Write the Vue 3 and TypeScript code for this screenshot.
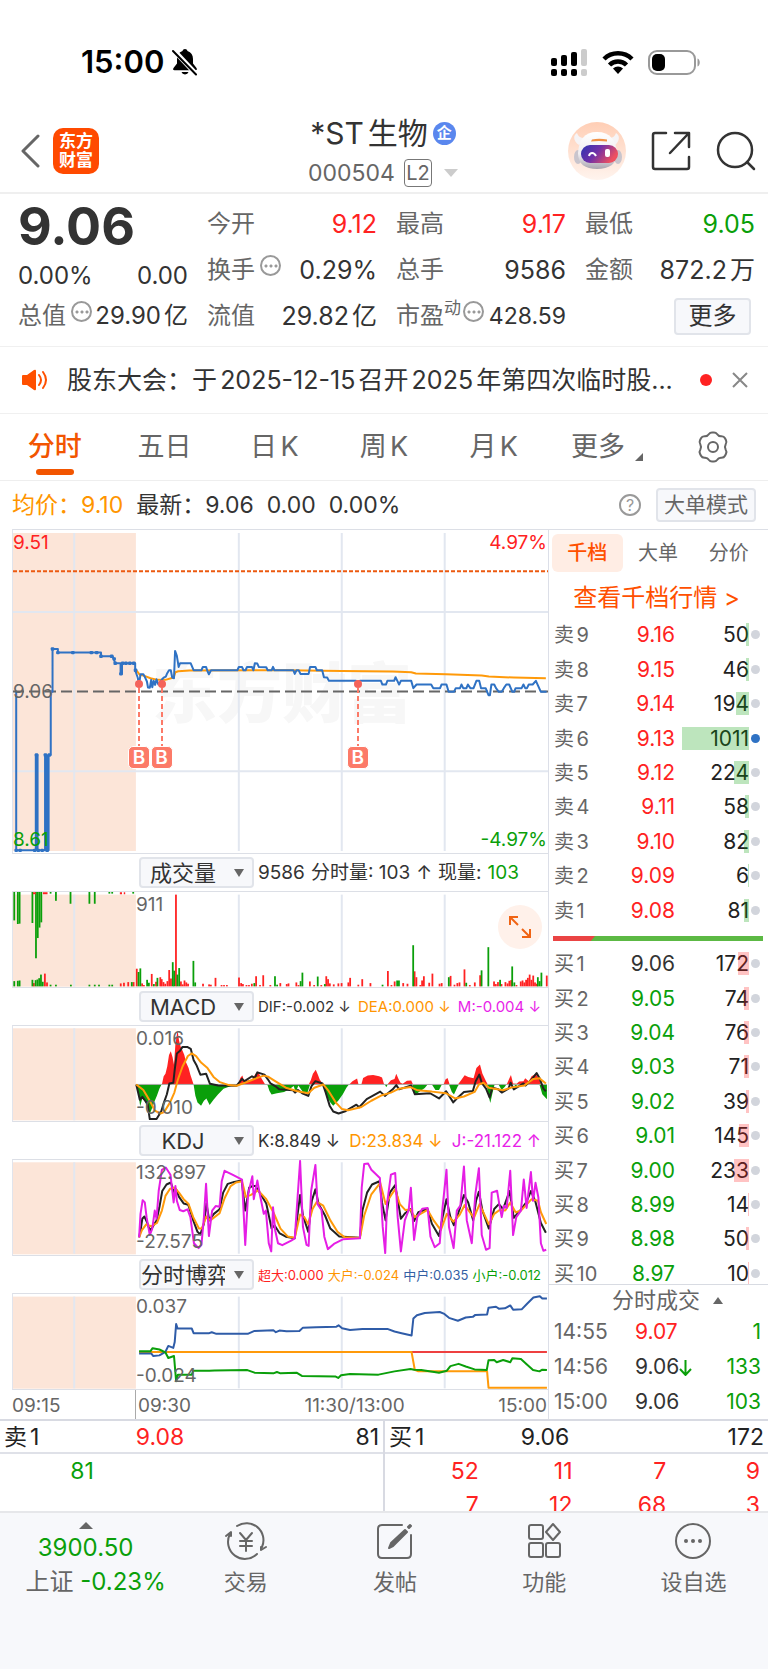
<script setup lang="ts">
import { ref } from 'vue'

type Tone = 'up' | 'down' | 'flat'
interface Level { label: string; price: string; tone: Tone; volume: number; active?: boolean }
interface Reading { text: string; tone: string }

const periods = ['分时', '五日', '日K', '周K', '月K', '更多']
const period = ref('分时')
const bookTabs = ['千档', '大单', '分价']
const bookTab = ref('千档')

const sells: Level[] = [
  { label: '卖9', price: '9.16', tone: 'up', volume: 50 },
  { label: '卖8', price: '9.15', tone: 'up', volume: 46 },
  { label: '卖7', price: '9.14', tone: 'up', volume: 194 },
  { label: '卖6', price: '9.13', tone: 'up', volume: 1011, active: true },
  { label: '卖5', price: '9.12', tone: 'up', volume: 224 },
  { label: '卖4', price: '9.11', tone: 'up', volume: 58 },
  { label: '卖3', price: '9.10', tone: 'up', volume: 82 },
  { label: '卖2', price: '9.09', tone: 'up', volume: 6 },
  { label: '卖1', price: '9.08', tone: 'up', volume: 81 },
]
const buys: Level[] = [
  { label: '买1', price: '9.06', tone: 'flat', volume: 172 },
  { label: '买2', price: '9.05', tone: 'down', volume: 74 },
  { label: '买3', price: '9.04', tone: 'down', volume: 76 },
  { label: '买4', price: '9.03', tone: 'down', volume: 71 },
  { label: '买5', price: '9.02', tone: 'down', volume: 39 },
  { label: '买6', price: '9.01', tone: 'down', volume: 145 },
  { label: '买7', price: '9.00', tone: 'down', volume: 233 },
  { label: '买8', price: '8.99', tone: 'down', volume: 14 },
  { label: '买9', price: '8.98', tone: 'down', volume: 50 },
  { label: '买10', price: '8.97', tone: 'down', volume: 10 },
]
const barWidth = (v: number) => `${Math.max(1, Math.round((v / 1011) * 67))}px`

const trades = [
  { time: '14:55', price: '9.07', tone: 'up', arrow: false, volume: '1' },
  { time: '14:56', price: '9.06', tone: 'flat', arrow: true, volume: '133' },
  { time: '15:00', price: '9.06', tone: 'flat', arrow: false, volume: '103' },
]

const sellQueue = ['81']
const buyQueue = ['52', '11', '7', '9', '7', '12', '68', '3']

const volumeReadings: Reading[] = [
  { text: '9586', tone: 'flat' },
  { text: '分时量: 103', tone: 'flat' },
  { text: '↑', tone: 'flat' },
  { text: '现量:', tone: 'flat' },
  { text: '103', tone: 'down' },
]
const macdReadings: Reading[] = [
  { text: 'DIF:-0.002 ↓', tone: 'flat' },
  { text: 'DEA:0.000 ↓', tone: 'amber' },
  { text: 'M:-0.004 ↓', tone: 'magenta' },
]
const kdjReadings: Reading[] = [
  { text: 'K:8.849 ↓', tone: 'flat' },
  { text: 'D:23.834 ↓', tone: 'amber' },
  { text: 'J:-21.122 ↑', tone: 'magenta' },
]
const gameReadings: Reading[] = [
  { text: '超大:0.000', tone: 'up' },
  { text: '大户:-0.024', tone: 'amber' },
  { text: '中户:0.035', tone: 'navy' },
  { text: '小户:-0.012', tone: 'down' },
]

const gridX = [206, 668, 957, 1246]
const pct = (x: number) => `${((x - 34) / 15.02).toFixed(2)}%`
const markers = [388, 451, 1002]

const pricePath =
  'M43 511V988H58H98V701H103V988H124V701H128V988H134V701H140V511H145V382H160V393H281V404H314L321 425H336V457H340V425H377V446L384 468 388 489 392 458 400 458 405 468 410 480 413 498 418 499 422 475 425 497 429 478 433 490 437 473 442 489 445 487 452 474 457 468 463 465 467 455 472 446 477 446 481 468 486 470 489 388 494 403 499 436 503 425 533 425 541 446 563 446 567 436 576 436 579 446 584 458 590 446 664 446 668 436 677 436 681 446 687 446 691 436 705 436 709 446 713 425 720 426 724 436 745 437 749 446 760 446 764 436 768 446 821 446 825 457 830 446 836 446 841 457 864 457 868 436 883 436 887 446 902 446 907 467 916 468 921 478 997 478 1002 489 1008 478 1067 478 1071 489 1081 489 1085 478 1104 478 1108 467 1113 478 1118 489 1123 478 1152 478 1158 500 1167 489 1208 489 1214 500 1233 500 1237 489 1251 489 1257 511 1272 511 1277 500 1289 500 1293 489 1298 500 1307 500 1311 489 1318 500 1327 500 1335 478 1343 478 1348 500 1361 500 1369 521 1373 521 1377 489 1385 489 1390 500 1398 511 1406 511 1412 500 1419 489 1427 489 1436 511 1441 511 1445 500 1462 500 1467 489 1472 500 1477 500 1482 489 1493 489 1502 478 1516 511 1532 511'
const averagePath =
  'M380 446L390 460 403 463 420 470 440 475 462 475 485 468 490 452 498 449 530 447 800 446 957 448 1100 450 1152 452 1165 456 1250 458 1350 462 1370 465 1440 468 1530 470'
const auctionDots = [
  [145, 382], [160, 393], [202, 393], [254, 393], [269, 393], [281, 404], [311, 404], [318, 412], [321, 425],
  [337, 457], [342, 425], [351, 425], [362, 425], [373, 425], [378, 446], [100, 701], [125, 701], [136, 701],
  [43, 988], [54, 988], [95, 988], [105, 988], [116, 988], [130, 988],
]

type Bar = [number, number]
const redBars: Bar[] = [
  [93, 396], [124, 367], [130, 394], [337, 397], [346, 395], [358, 393], [373, 393], [382, 352], [397, 397], [402, 402],
  [424, 368], [436, 392], [448, 378], [452, 384], [457, 393], [462, 398], [468, 390], [473, 356], [478, 382], [492, 125],
  [506, 391], [511, 400], [516, 388], [521, 394], [526, 398], [568, 398], [585, 400], [590, 401], [603, 380], [620, 402],
  [627, 402], [635, 402], [669, 379], [675, 396], [680, 399], [690, 402], [697, 402], [705, 398], [717, 375], [728, 402],
  [737, 372], [757, 402], [785, 396], [803, 399], [808, 397], [830, 394], [836, 402], [868, 391], [880, 402], [900, 402],
  [914, 375], [919, 384], [924, 397], [935, 400], [948, 397], [957, 396], [976, 394], [981, 380], [1004, 401], [1015, 384],
  [1038, 396], [1087, 359], [1097, 402], [1106, 391], [1130, 396], [1142, 398], [1162, 360], [1167, 378], [1178, 402],
  [1183, 388], [1188, 375], [1203, 395], [1212, 367], [1232, 398], [1238, 396], [1263, 374], [1274, 401], [1282, 396],
  [1288, 394], [1302, 354], [1317, 402], [1331, 394], [1346, 372], [1385, 391], [1390, 399], [1396, 393], [1406, 399],
  [1417, 393], [1423, 397], [1428, 389], [1433, 387], [1448, 402], [1460, 391], [1465, 388], [1470, 394], [1475, 386],
  [1480, 380], [1485, 370], [1490, 386], [1495, 373], [1500, 394], [1505, 398], [1533, 373],
]
const greenBars: Bar[] = [
  [38, 390], [48, 389], [53, 388], [89, 386], [98, 387], [103, 385], [108, 381], [113, 370], [118, 392], [140, 401],
  [155, 401], [197, 401], [249, 401], [264, 401], [276, 401], [305, 401], [313, 401], [368, 393], [387, 362], [392, 351],
  [411, 386], [416, 395], [430, 399], [440, 380], [483, 332], [487, 358], [496, 370], [501, 350], [541, 328], [546, 394],
  [712, 396], [770, 375], [776, 401], [842, 390], [847, 364], [890, 376], [910, 399], [1072, 401], [1113, 388], [1118, 388],
  [1158, 280], [1258, 378], [1307, 395], [1350, 357], [1369, 286], [1402, 386], [1436, 345], [1442, 394], [1508, 378],
  [1513, 390], [1518, 364],
]
const hangingBars: Bar[] = [
  [38, 204], [48, 215], [53, 214], [89, 212], [99, 320], [104, 258], [109, 226], [114, 210], [140, 122], [155, 144],
  [196, 153], [249, 153], [264, 153], [305, 122], [313, 122], [372, 122],
]

const macdRed =
  'M452 295L457 270 462 262 467 240 472 205 477 193 482 212 486 235 490 170 496 130 500 160 505 180 510 192 515 205 520 228 527 245 532 265 541 295ZM666 295L672 275 678 268 683 285 705 280 715 262 722 256 731 275 742 295ZM864 295L870 282 876 262 884 250 890 265 895 280 905 295ZM978 295L987 285 1000 277 1004 295ZM1012 295L1017 275 1030 268 1045 266 1062 270 1070 274 1076 295ZM1085 295L1095 282 1105 278 1110 262 1117 280 1122 290 1128 293 1140 284 1152 283 1157 295ZM1243 295L1248 280 1254 275 1260 295ZM1283 295L1292 282 1302 267 1312 272 1327 276 1335 245 1345 234 1352 262 1362 285 1367 295ZM1420 295L1428 275 1432 266 1438 292 1448 293 1455 286 1467 285 1472 276 1482 285 1490 270 1502 262 1512 280 1516 295Z'
const macdGreen =
  'M380 295L387 330 391 362 397 338 403 345 410 360 418 385 423 372 430 350 438 330 445 308 451 295ZM541 295L546 330 552 350 562 360 570 345 577 338 586 358 597 342 610 325 625 308 640 302 660 295ZM748 295L754 315 760 326 775 322 795 318 810 310 822 300 828 320 835 298 848 318 860 322 868 295ZM905 295L912 325 925 350 933 360 947 345 960 325 970 305 977 295ZM1078 295L1082 304 1086 295ZM1155 295L1162 328 1172 320 1190 306 1198 295ZM1210 295L1220 312 1230 312 1238 295ZM1258 295L1266 318 1272 326 1282 302 1286 295ZM1364 295L1368 325 1374 352 1380 322 1386 295ZM1397 295L1406 312 1415 302 1419 295ZM1440 295L1446 302 1450 295ZM1512 295L1520 325 1533 340V295Z'
const difPath =
  'M380 295L390 342 397 333 405 345 412 355 418 401H437L450 378 458 350 466 325 473 292 484 290 488 250 494 200 503 192 510 180 523 180 533 186 541 220 550 238 560 265 576 262 587 293 610 298 662 299 670 288 677 278 684 285 705 270 713 275 720 258 740 265 750 280 757 292 770 300 782 310 820 313 826 320 834 312 846 322 863 330 872 300 883 285 903 292 912 320 923 360 933 378 948 384 965 378 998 357 1006 365 1027 340 1065 317 1078 330 1100 310 1110 297 1118 310 1152 298 1162 325 1205 322 1230 338 1250 316 1270 350 1280 338 1300 318 1325 315 1333 285 1343 265 1350 290 1362 308 1372 335 1380 305 1396 310 1406 320 1425 308 1431 290 1440 310 1467 292 1473 298 1490 280 1504 260 1512 275 1523 308 1530 316'
const deaPath =
  'M380 295L400 312 418 345 432 375 448 384 458 380 475 350 487 320 497 280 510 240 525 208 536 200 548 208 562 228 580 245 597 272 615 288 640 297 662 299 690 288 720 275 738 268 750 271 770 285 800 305 830 315 863 322 880 305 905 295 920 315 940 350 957 370 975 374 1010 365 1040 345 1070 328 1095 320 1118 308 1150 303 1170 313 1210 317 1250 322 1275 338 1300 332 1330 318 1342 295 1355 290 1370 305 1390 309 1410 313 1435 304 1470 298 1495 278 1512 276 1530 292'

const kPath =
  'M388 352L393 325 397 295 403 288 410 305 418 330 425 322 437 300 445 260 453 210 465 190 477 184 488 218 492 205 500 228 513 248 526 252 540 300 552 335 560 343 570 310 577 248 585 300 598 280 614 266 624 215 637 188 655 182 676 178 686 270 697 200 706 195 715 195 725 212 745 248 760 325 768 315 783 340 800 350 825 355 832 290 840 222 848 285 863 335 873 240 883 205 892 250 910 285 925 325 950 349 1008 353 1015 270 1028 215 1042 190 1063 180 1070 245 1080 300 1092 215 1107 192 1113 230 1123 295 1135 278 1150 265 1160 302 1172 275 1198 265 1210 310 1230 348 1240 290 1251 235 1262 290 1272 315 1288 265 1300 222 1312 245 1326 300 1334 240 1342 212 1352 270 1370 325 1385 265 1398 250 1410 265 1428 210 1440 292 1456 272 1475 245 1488 210 1500 240 1516 308 1530 338'
const dPath =
  'M388 352L396 330 408 312 422 318 438 308 452 270 462 225 475 203 488 200 500 215 513 235 527 250 540 290 556 325 564 325 577 288 588 300 614 278 628 232 645 195 660 184 677 180 688 228 702 222 722 208 745 235 765 275 785 325 805 349 825 353 840 282 852 290 863 312 875 265 887 243 905 255 925 300 945 335 965 352 1008 354 1020 285 1040 220 1065 185 1080 250 1096 222 1107 205 1120 250 1135 268 1150 267 1162 290 1198 268 1215 300 1235 330 1252 280 1270 304 1288 283 1302 253 1328 292 1344 250 1370 312 1385 280 1400 268 1416 270 1430 245 1445 275 1460 270 1490 235 1508 240 1516 275 1531 311'
const jPath =
  'M388 352L392 280 398 238 404 245 409 290 418 345 425 325 432 270 437 295 443 210 452 145 463 138 476 160 485 245 490 195 494 240 502 268 512 272 524 266 532 290 542 370 555 385 563 375 570 290 576 188 584 348 593 270 603 256 614 258 620 180 628 148 650 160 677 175 686 375 694 220 706 165 710 235 720 178 727 220 738 280 744 270 752 370 759 395 764 260 770 330 778 370 790 376 815 362 825 355 831 260 840 118 848 320 858 375 864 378 871 210 883 130 889 250 900 268 908 350 918 388 935 372 960 358 1008 355 1013 200 1020 127 1031 126 1040 145 1064 170 1072 320 1079 400 1084 250 1095 160 1107 155 1114 290 1123 395 1134 300 1145 268 1151 200 1160 360 1169 290 1183 264 1198 262 1206 350 1218 382 1232 370 1240 260 1251 145 1258 320 1271 385 1280 270 1290 255 1300 135 1308 300 1322 370 1332 220 1342 140 1350 345 1362 390 1372 385 1378 215 1393 209 1400 255 1406 290 1412 255 1420 262 1430 148 1438 345 1447 290 1460 270 1468 175 1476 262 1488 152 1494 240 1501 185 1509 230 1516 370 1523 393 1531 390'

const midPath =
  'M388 295H422L428 303 445 301 462 290 470 272 484 278 488 260 492 205 496 219H536L541 233 585 233 592 230 605 235H693L712 226 765 224 772 230 782 225 802 227 838 226 848 216 885 215 942 213 948 209 958 218 980 223 1015 220 1085 220 1105 228 1125 233 1153 240 1158 188 1168 178 1190 171 1232 168 1245 174 1258 186 1283 195 1305 185 1325 183 1332 177 1365 176 1369 155 1390 152 1398 158 1415 157 1430 148 1438 161 1462 160 1478 142 1495 124 1513 120 1520 127 1533 127'
const bigPath = 'M388 291H1153L1162 345 1172 350H1365L1369 400H1533'
const smallPath =
  'M388 288H420L426 279 445 283 462 292 470 309 486 303 492 380 497 360 536 360 540 348 585 348 600 347 692 346 712 354 765 356 775 352 785 356 830 354 845 364 940 366 947 370 955 362 980 358 1060 360 1105 350 1150 343 1160 345 1180 346 1230 354 1252 348 1262 334 1285 327 1305 335 1330 344 1364 346 1369 316 1385 315 1392 322 1410 315 1430 322 1436 310 1460 312 1476 328 1494 346 1512 350 1520 345 1533 346'
</script>

<template>
  <div class="page">
    <div class="status">
      <div class="clock">
        <span>15:00</span>
        <svg width="26" height="28" viewBox="0 0 26 28" aria-hidden="true">
          <path d="M13 1c-1.300 0-2.200.8-2.500 2C6.800 4.200 5 7.200 5 11v4.500L1.500 20c-.8 1.300-.3 2.300 1 2.300h21c1.300 0 1.800-1 1-2.300L21 15.500V11c0-3.800-1.800-6.800-5.500-8C15.200 1.800 14.300 1 13 1zM9.500 24a3.600 3.200 0 0 0 7 0z" fill="#000" />
          <path d="M1 1.500L25 27" stroke="#fff" stroke-width="5" />
          <path d="M1 3L24 26.500" stroke="#000" stroke-width="2" stroke-linecap="round" />
        </svg>
      </div>
      <div class="signals">
        <svg width="37" height="27" viewBox="0 0 37 27" aria-hidden="true">
          <g fill="#000">
            <rect x="0" y="9" width="6" height="8" rx="2" /><rect x="10" y="6" width="6" height="11" rx="2" /><rect x="20" y="3" width="6" height="14" rx="2" />
            <rect x="0" y="20" width="6" height="7" rx="2" /><rect x="10" y="20" width="6" height="7" rx="2" /><rect x="20" y="20" width="6" height="7" rx="2" />
          </g>
          <g fill="#ccc"><rect x="30" y="0" width="6" height="17" rx="2" /><rect x="30" y="20" width="6" height="7" rx="2" /></g>
        </svg>
        <svg width="32" height="24" viewBox="0 0 32 24" aria-hidden="true">
          <g fill="none" stroke="#000" stroke-width="4.500">
            <path d="M2 9a20 20 0 0 1 28 0" /><path d="M7.500 15a12 12 0 0 1 17 0" />
          </g>
          <path d="M16 24l-5-5.500a7.500 7.500 0 0 1 10 0z" fill="#000" />
        </svg>
        <svg width="53" height="25" viewBox="0 0 53 25" aria-hidden="true">
          <rect x="1" y="1" width="46" height="23" rx="8" fill="none" stroke="#999" stroke-width="2" />
          <rect x="4" y="4" width="13" height="17" rx="5" fill="#000" />
          <path d="M49.500 8.500c3 1 3 7 0 8z" fill="#999" />
        </svg>
      </div>
    </div>

    <header class="head">
      <div class="head-left">
        <button class="plain" aria-label="返回">
          <svg width="20" height="34" viewBox="0 0 20 34"><path d="M18 2L3 17l15 15" fill="none" stroke="#666" stroke-width="3" stroke-linecap="round" stroke-linejoin="round" /></svg>
        </button>
        <a class="brand" href="#home"><span>东方</span><span>财富</span></a>
      </div>
      <div class="head-mid">
        <h1>*ST生物<span class="corp">企</span></h1>
        <p class="code">000504<span class="l2">L2</span>
          <svg width="14" height="8" viewBox="0 0 14 8" aria-hidden="true"><path d="M0 0h14L7 8z" fill="#ccc" /></svg>
        </p>
      </div>
      <div class="head-right">
        <button class="plain" aria-label="智能助手">
          <svg width="58" height="58" viewBox="0 0 58 58">
            <defs>
              <linearGradient id="halo" x1="0" y1="0" x2="0" y2="1"><stop offset="0" stop-color="#ffceb5" /><stop offset="1" stop-color="#fff4ee" /></linearGradient>
              <linearGradient id="visor" x1="0" y1="0" x2="1" y2="0.400"><stop offset="0" stop-color="#2c35b0" /><stop offset="0.500" stop-color="#7030a8" /><stop offset="1" stop-color="#ee5060" /></linearGradient>
              <linearGradient id="shell" x1="0" y1="0" x2="0" y2="1"><stop offset="0" stop-color="#fff" /><stop offset="0.600" stop-color="#efedf0" /><stop offset="1" stop-color="#aaa6b0" /></linearGradient>
            </defs>
            <circle cx="29" cy="29" r="29" fill="url(#halo)" />
            <path d="M9 11c-4 2-4 8 2 12l6-7c-5 0-7-2-8-5zM48 11c4 2 4 8-1 12l-6-7c4 0 6-2 7-5z" fill="#f6f4f6" />
            <ellipse cx="10" cy="35" rx="4" ry="7" fill="#c9c5cd" /><ellipse cx="50" cy="35" rx="4" ry="7" fill="#c9c5cd" />
            <path d="M29 10c13 0 19 8 20 21 0 11-8 16-20 16S10 42 10 31c1-13 6-21 19-21z" fill="url(#shell)" />
            <path d="M24 17.500q7-1.500 15 0v2q-8-1-16 0z" fill="#f09045" />
            <rect x="13" y="23" width="37" height="18" rx="9" fill="url(#visor)" />
            <path d="M21 34c1-4 5-4 7 0" fill="none" stroke="#fff" stroke-width="2" /><rect x="37" y="27" width="5" height="8" rx="2" fill="#fff" />
          </svg>
        </button>
        <button class="plain" aria-label="分享">
          <svg width="40" height="40" viewBox="0 0 40 40" fill="none" stroke="#333" stroke-width="2.500" stroke-linecap="round" stroke-linejoin="round">
            <path d="M15 2H4a2 2 0 0 0-2 2v32a2 2 0 0 0 2 2h32a2 2 0 0 0 2-2V26M19 22L37 3M24 2h14v14" />
          </svg>
        </button>
        <button class="plain" aria-label="搜索">
          <svg width="40" height="40" viewBox="0 0 40 40" fill="none" stroke="#333" stroke-width="2.500" stroke-linecap="round"><circle cx="19" cy="19" r="17" /><path d="M31 31l7 7" /></svg>
        </button>
      </div>
    </header>

    <section class="stats">
      <div class="col">
        <strong class="last">9.06</strong>
        <div class="cell change"><span>0.00%</span><span>0.00</span></div>
        <div class="cell"><span class="name">总值<i class="more-dot"></i></span><b>29.90亿</b></div>
      </div>
      <div class="col">
        <div class="cell"><span class="name">今开</span><b class="up">9.12</b></div>
        <div class="cell"><span class="name">换手<i class="more-dot"></i></span><b>0.29%</b></div>
        <div class="cell"><span class="name">流值</span><b>29.82亿</b></div>
      </div>
      <div class="col">
        <div class="cell"><span class="name">最高</span><b class="up">9.17</b></div>
        <div class="cell"><span class="name">总手</span><b>9586</b></div>
        <div class="cell"><span class="name">市盈<sup>动</sup><i class="more-dot tight"></i></span><b class="pe">428.59</b></div>
      </div>
      <div class="col">
        <div class="cell"><span class="name">最低</span><b class="down">9.05</b></div>
        <div class="cell"><span class="name">金额</span><b>872.2万</b></div>
        <div class="cell end"><button class="chip big">更多</button></div>
      </div>
    </section>

    <section class="notice">
      <svg width="26" height="22" viewBox="0 0 26 22" aria-hidden="true">
        <path d="M0 7q0-1 1-1h4l7-5q2-1 2 1v18q0 2-2 1l-7-5H1q-1 0-1-1z" fill="#ff5000" />
        <path d="M17 6q4 5 0 10M21 3q6 8 0 16" fill="none" stroke="#ff5000" stroke-width="2" stroke-linecap="round" />
      </svg>
      <p>股东大会：于2025-12-15召开2025年第四次临时股...</p>
      <span class="dot"></span>
      <button class="plain" aria-label="关闭"><svg width="16" height="16" viewBox="0 0 16 16"><path d="M1 1l14 14M15 1L1 15" stroke="#888" stroke-width="2" /></svg></button>
    </section>

    <nav class="periods">
      <button v-for="p in periods" :key="p" class="plain period" :class="{ on: p === period, menu: p === '更多' }" @click="period = p">{{ p }}</button>
      <button class="plain period" aria-label="设置">
        <svg width="32" height="32" viewBox="0 0 32 32" fill="none" stroke="#666" stroke-width="2" stroke-linejoin="round">
          <path d="M12 3q1-1.500 3-1.500h2q2 0 3 1.500 1.500 2.500 4.500 2.200 2.500 0 3.500 2l1 2q1 2-.3 4-1.500 2.800 0 5.600 1.300 2 .3 4l-1 2q-1 2-3.500 2Q21.500 26.500 20 29q-1 1.500-3 1.500h-2q-2 0-3-1.500-1.500-2.500-4.500-2.200-2.500 0-3.500-2l-1-2q-1-2 .3-4 1.500-2.800 0-5.600-1.300-2-.3-4l1-2q1-2 3.500-2Q10.500 5.500 12 3z" />
          <circle cx="16" cy="16" r="5" />
        </svg>
      </button>
    </nav>

    <section class="summary">
      <span class="amber">均价：9.10</span>
      <span class="latest">最新：9.06</span><span>0.00</span><span>0.00%</span>
      <button class="plain help" aria-label="帮助">?</button>
      <button class="chip">大单模式</button>
    </section>

    <main class="market">
      <div class="charts">
        <div class="plot price">
          <span class="mark" aria-hidden="true">东方财富</span>
          <svg class="draw" viewBox="34 24 1502 972" preserveAspectRatio="none" aria-label="分时走势">
            <rect x="34" y="33" width="345" height="957" class="shade" />
            <path v-for="x in gridX" :key="x" :d="`M${x} 33V990`" class="rule" />
            <path d="M34 271H1536M34 750H1536" class="rule" />
            <path d="M34 148H1536" class="limit" />
            <path d="M34 510H1536" class="base" />
            <path :d="averagePath" class="line amber-line" />
            <path :d="pricePath" class="line blue-line" />
            <path d="M101 701V988M127 701V988M132 701V988M338 425V457" class="line blue-line" />
            <rect v-for="(d, i) in auctionDots" :key="i" :x="d[0] - 5" :y="d[1] - 5" width="10" height="10" rx="3" fill="#2f72c4" />
          </svg>
          <span v-for="m in markers" :key="m" class="flag" :style="{ left: pct(m) }"><i></i><em>B</em></span>
          <span class="tag top up">9.51</span><span class="tag mid">9.06</span><span class="tag bottom down">8.61</span>
          <span class="tag top right up">4.97%</span><span class="tag bottom right down">-4.97%</span>
        </div>

        <div class="bar-head">
          <select class="pick" aria-label="成交量指标"><option>成交量</option></select>
          <div class="readings vol"><span v-for="r in volumeReadings" :key="r.text + r.tone" :class="r.tone">{{ r.text }}</span></div>
        </div>
        <div class="plot">
          <svg class="draw" viewBox="34 117 1502 291" preserveAspectRatio="none" aria-label="成交量">
            <rect x="34" y="125" width="345" height="282" class="shade" />
            <path v-for="x in gridX" :key="x" :d="`M${x} 125V407`" class="rule" />
            <rect v-for="b in hangingBars" :key="'h' + b[0]" :x="b[0] - 3" y="117" width="5" :height="b[1] - 117" class="fall" />
            <path d="M90 121H98M118 121H131M334 121H340M345 121H349" class="rise-line" />
            <rect v-for="b in redBars" :key="'r' + b[0]" :x="b[0] - 3" :y="b[1]" width="5" :height="406 - b[1]" class="rise" />
            <rect v-for="b in greenBars" :key="'g' + b[0]" :x="b[0] - 3" :y="b[1]" width="5" :height="406 - b[1]" class="fall" />
          </svg>
          <span class="tag top open">911</span>
          <button class="plain expand" aria-label="展开">
            <svg width="22" height="22" viewBox="0 0 22 22" fill="none" stroke="#f06414" stroke-width="2"><path d="M1 9V1h8M1 1l8 8M21 13v8h-8M21 21l-8-8" /></svg>
          </button>
        </div>

        <div class="bar-head">
          <select class="pick" aria-label="MACD指标"><option>MACD</option></select>
          <div class="readings macd"><span v-for="r in macdReadings" :key="r.text" :class="r.tone">{{ r.text }}</span></div>
        </div>
        <div class="plot">
          <svg class="draw" viewBox="34 116 1502 291" preserveAspectRatio="none" aria-label="MACD">
            <rect x="34" y="123" width="345" height="282" class="shade" />
            <path v-for="x in gridX" :key="x" :d="`M${x} 123V405`" class="rule" />
            <path :d="macdRed" class="rise" /><path :d="macdGreen" class="fall" />
            <path d="M380 295H1533" class="zero" />
            <path :d="difPath" class="line black-line" /><path :d="deaPath" class="line amber-line" />
          </svg>
          <span class="tag top open">0.016</span><span class="tag bottom open">-0.010</span>
        </div>

        <div class="bar-head">
          <select class="pick" aria-label="KDJ指标"><option>KDJ</option></select>
          <div class="readings kdj"><span v-for="r in kdjReadings" :key="r.text" :class="r.tone">{{ r.text }}</span></div>
        </div>
        <div class="plot">
          <svg class="draw" viewBox="34 115 1502 291" preserveAspectRatio="none" aria-label="KDJ">
            <rect x="34" y="122" width="345" height="282" class="shade" />
            <path v-for="x in gridX" :key="x" :d="`M${x} 122V402`" class="rule" />
            <path :d="kPath" class="line black-line" /><path :d="dPath" class="line amber-line" /><path :d="jPath" class="line magenta-line" />
          </svg>
          <span class="tag top open">132.897</span><span class="tag bottom open">-27.575</span>
        </div>

        <div class="bar-head">
          <select class="pick" aria-label="分时博弈指标"><option>分时博弈</option></select>
          <div class="readings game"><span v-for="r in gameReadings" :key="r.text" :class="r.tone">{{ r.text }}</span></div>
        </div>
        <div class="plot">
          <svg class="draw" viewBox="34 113 1502 291" preserveAspectRatio="none" aria-label="分时博弈">
            <rect x="34" y="121" width="345" height="282" class="shade" />
            <path v-for="x in gridX" :key="x" :d="`M${x} 121V402`" class="rule" />
            <path d="M388 291H1533" class="line red-line" />
            <path :d="bigPath" class="line amber-line" /><path :d="midPath" class="line navy-line" /><path :d="smallPath" class="line green-line" />
          </svg>
          <span class="tag top open">0.037</span><span class="tag bottom open">-0.024</span>
        </div>
        <div class="axis"><span>09:15</span><span>09:30</span><span>11:30/13:00</span><span>15:00</span></div>
      </div>

      <aside class="book">
        <div class="book-tabs">
          <button v-for="t in bookTabs" :key="t" class="plain" :class="{ on: t === bookTab }" @click="bookTab = t">{{ t }}</button>
        </div>
        <a class="all" href="#levels">查看千档行情 &gt;</a>
        <table class="levels sells">
          <tbody>
            <tr v-for="l in sells" :key="l.label">
              <th scope="row">{{ l.label }}</th><td :class="l.tone">{{ l.price }}</td>
              <td class="qty"><span>{{ l.volume }}</span><i :style="{ width: barWidth(l.volume) }"></i><u :class="{ active: l.active }"></u></td>
            </tr>
          </tbody>
        </table>
        <div class="ratio"><i></i></div>
        <table class="levels buys">
          <tbody>
            <tr v-for="l in buys" :key="l.label">
              <th scope="row">{{ l.label }}</th><td :class="l.tone">{{ l.price }}</td>
              <td class="qty"><span>{{ l.volume }}</span><i :style="{ width: barWidth(l.volume) }"></i><u></u></td>
            </tr>
          </tbody>
        </table>
        <button class="plain ticks-head">分时成交<svg width="10" height="7" viewBox="0 0 10 7" aria-hidden="true"><path d="M5 0l5 7H0z" fill="#666" /></svg></button>
        <table class="ticks">
          <tbody>
            <tr v-for="t in trades" :key="t.time">
              <th scope="row">{{ t.time }}</th>
              <td :class="t.tone">{{ t.price }}<svg v-if="t.arrow" width="13" height="16" viewBox="0 0 13 16" aria-hidden="true"><path d="M6.500 0v15M1 9l5.500 6L12 9" fill="none" stroke="#0a9f0a" stroke-width="2" /></svg></td>
              <td class="down">{{ t.volume }}</td>
            </tr>
          </tbody>
        </table>
      </aside>
    </main>

    <section class="queues">
      <div class="queue">
        <div class="queue-head"><span>卖1</span><span class="up">9.08</span><span>81</span></div>
        <div class="queue-grid down"><span v-for="(q, i) in sellQueue" :key="i">{{ q }}</span></div>
      </div>
      <div class="queue">
        <div class="queue-head"><span>买1</span><span>9.06</span><span>172</span></div>
        <div class="queue-grid up"><span v-for="(q, i) in buyQueue" :key="i">{{ q }}</span></div>
      </div>
    </section>

    <footer class="dock">
      <a class="index" href="#index">
        <svg width="14" height="7" viewBox="0 0 14 7" aria-hidden="true"><path d="M7 0l7 7H0z" fill="#666" /></svg>
        <span class="down">3900.50</span>
        <span class="index-name">上证 <span class="down">-0.23%</span></span>
      </a>
      <a href="#trade">
        <svg width="42" height="38" viewBox="0 0 42 38" fill="none" stroke="#666" stroke-width="2" stroke-linecap="round" stroke-linejoin="round">
          <path d="M12 4a17 17 0 0 1 25 21M36 28v-3M36 28l5-3M32 32A17 17 0 0 1 5 12M1 14l5-4v4" />
          <path d="M15 11l6 7 6-7M21 18v11M15 19h12M15 24h12" />
        </svg>
        <span>交易</span>
      </a>
      <a href="#post">
        <svg width="38" height="38" viewBox="0 0 38 38" fill="none" stroke="#666" stroke-width="2" stroke-linecap="round" stroke-linejoin="round">
          <path d="M26 3H6q-4 0-4 4v25q0 4 4 4h25q4 0 4-4V13" />
          <path d="M13 26l2-5L29 8l2 2-14 14zM32 5l2-2 1 1-2 2z" fill="#666" />
        </svg>
        <span>发帖</span>
      </a>
      <a href="#features">
        <svg width="36" height="36" viewBox="0 0 36 36" fill="none" stroke="#666" stroke-width="2" stroke-linejoin="round">
          <rect x="3" y="2" width="14" height="14" rx="2" /><rect x="3" y="20" width="14" height="14" rx="2" /><rect x="20" y="20" width="14" height="14" rx="2" /><path d="M27 1l7 8-7 8-7-8z" />
        </svg>
        <span>功能</span>
      </a>
      <a href="#watch">
        <svg width="38" height="38" viewBox="0 0 38 38"><circle cx="19" cy="19" r="17" fill="none" stroke="#666" stroke-width="2" /><g fill="#666"><circle cx="12" cy="19" r="2" /><circle cx="19" cy="19" r="2" /><circle cx="26" cy="19" r="2" /></g></svg>
        <span>设自选</span>
      </a>
    </footer>
  </div>
</template>

<style>
body { margin: 0; background: #fff; }
</style>

<style scoped>
.page { font-family: Inter, "Noto Sans CJK SC", sans-serif; color: #333; font-size: 24px; background: #fff; text-autospace: normal; overflow: hidden; }
.page *, .page *::before, .page *::after { box-sizing: border-box; }
h1, p { margin: 0; font-weight: 400; }
i, em, u { font-style: normal; text-decoration: none; }
b, th { font-weight: 400; }
a { color: inherit; text-decoration: none; }
svg { display: block; flex: none; }
table { border-collapse: collapse; width: 100%; }
th, td { padding: 0; }
button, select { font: inherit; color: inherit; margin: 0; text-autospace: inherit; }
.plain { border: 0; background: none; padding: 0; }
.up { color: #f22; }
.down { color: #0a9f0a; }
.flat { color: #333; }
.amber { color: #ff9500; }
.magenta { color: #e81ee8; }
.navy { color: #3460a4; }

.status { height: 112px; padding: 44px 67px 32px 81px; display: flex; justify-content: space-between; align-items: center; color: #000; }
.clock { display: flex; align-items: center; gap: 8px; font-size: 31px; font-weight: 600; line-height: 36px; }
.signals { display: flex; align-items: center; gap: 14px; }

.head { height: 82px; padding: 2px 12px 8px; border-bottom: 2px solid #efefef; display: grid; grid-template-columns: 1fr auto 1fr; align-items: center; }
.head-left { display: flex; align-items: center; gap: 13px; padding-left: 8px; }
.brand { width: 46px; height: 46px; border-radius: 10px; background: #ff4a00; color: #fff; font-size: 17px; font-weight: 700; line-height: 19px; display: flex; flex-direction: column; align-items: center; justify-content: center; }
.head-mid { display: flex; flex-direction: column; align-items: center; gap: 7px; padding-right: 2px; }
h1 { font-size: 30px; line-height: 38px; display: flex; align-items: center; gap: 5px; }
.corp { width: 23px; height: 23px; border-radius: 50%; background: #5a87ee; color: #fff; font-size: 15px; font-weight: 700; line-height: 22px; text-align: center; }
.code { font-size: 23px; line-height: 28px; color: #666; display: flex; align-items: center; }
.l2 { width: 28px; height: 28px; margin: 0 12px 0 9px; border: 1px solid #777; border-radius: 4px; font-size: 20px; line-height: 26px; text-align: center; }
.head-right { display: flex; align-items: center; justify-content: flex-end; gap: 25px; }

.stats { display: grid; grid-template-columns: repeat(4, 1fr); column-gap: 19px; padding: 7px 13px 7px 18px; border-bottom: 1px solid #f0f0f0; }
.col { display: flex; flex-direction: column; }
.last { height: 50px; font-size: 52px; line-height: 52px; font-weight: 700; }
.cell { height: 46px; line-height: 46px; display: flex; justify-content: space-between; }
.change { height: 42px; line-height: 50px; }
.col + .col b { font-size: 25px; }
.name { color: #666; display: flex; white-space: nowrap; }
.name sup { font-size: 17px; line-height: 30px; vertical-align: top; }
.more-dot { width: 21px; height: 21px; margin: 8px 0 0 5px; border: 2px solid #999; border-radius: 50%; background: radial-gradient(circle at 4px 9px, #999 1px, transparent 2px), radial-gradient(circle at 9px 9px, #999 1px, transparent 2px), radial-gradient(circle at 14px 9px, #999 1px, transparent 2px); }
.more-dot.tight { margin-left: 2px; }
.cell b { white-space: nowrap; }
.col .cell .pe { font-size: 23px; }
.end { justify-content: flex-end; align-items: center; padding-right: 4px; }
.chip { height: 34px; padding: 0 6px; border: 2px solid #e1e4ea; border-radius: 4px; background: #f7f8fb; font-size: 21px; line-height: 28px; color: #666; white-space: nowrap; }
.chip.big { width: 77px; height: 37px; font-size: 24px; color: #333; }

.notice { height: 67px; padding: 0 20px 0 22px; border-bottom: 1px solid #f0f0f0; display: flex; align-items: center; }
.notice p { flex: 1; margin-left: 19px; white-space: nowrap; font-size: 25px; line-height: 40px; }
.dot { width: 12px; height: 12px; border-radius: 50%; background: #f22; margin-right: 20px; }

.periods { height: 67px; border-bottom: 1px solid #eee; display: grid; grid-template-columns: repeat(7, 1fr); }
.period { position: relative; display: flex; align-items: center; justify-content: center; font-size: 27px; line-height: 40px; color: #666; }
.period.on { color: #f25500; font-weight: 500; }
.period.on::after { content: ""; position: absolute; bottom: 5px; left: 50%; width: 38px; height: 6px; margin-left: -19px; border-radius: 3px; background: #f25500; }
.period.menu::after { content: ""; border-left: 8px solid transparent; border-bottom: 8px solid #666; margin: 20px -7px 0 10px; }

.summary { height: 48px; padding: 0 12px; display: flex; align-items: center; font-size: 23px; line-height: 30px; gap: 13px; white-space: nowrap; }
.help { width: 22px; height: 22px; margin: 0 2px 0 auto; border: 2px solid #999; border-radius: 50%; color: #999; font-size: 16px; line-height: 18px; }

.market { display: grid; grid-template-columns: 536fr 220fr; padding-left: 12px; }
.charts { min-width: 0; }
.plot { position: relative; height: 97px; border-left: 1px solid #e1e4ec; border-top: 1px solid #dcdfe6; border-bottom: 1px solid #dcdfe6; }
.plot.price { height: 325px; }
.draw { position: absolute; inset: 0; width: 100%; height: 100%; }
.draw path { vector-effect: non-scaling-stroke; }
.shade { fill: #fce5d8; }
.rule { stroke: #e2e7f0; stroke-width: 2; fill: none; }
.limit { stroke: #ec5a10; stroke-width: 2; stroke-dasharray: 4 2; }
.base { stroke: #666; stroke-width: 2; stroke-dasharray: 11 5; }
.line { fill: none; stroke-width: 2; stroke-linejoin: round; }
.blue-line { stroke: #2f72c4; }
.amber-line { stroke: #ff9a0a; }
.black-line { stroke: #222; }
.magenta-line { stroke: #e51ee5; }
.red-line { stroke: #ee4040; }
.navy-line { stroke: #2f5ca8; }
.green-line { stroke: #0a9f0a; }
.zero { stroke: #aaa; stroke-width: 1; }
.rise { fill: #f22; }
.fall { fill: #0a9f0a; }
.rise-line { stroke: #f22; stroke-width: 2; }
.mark { position: absolute; left: 26%; top: 124px; font-size: 65px; line-height: 80px; font-weight: 900; color: #f7f7f7; }
.tag { position: absolute; left: 0; font-size: 19px; line-height: 22px; color: #666; }
.tag.up { color: #f22; }
.tag.down { color: #0a9f0a; }
.tag.top { top: 2px; }
.tag.mid { top: 151px; }
.tag.bottom { bottom: 2px; }
.tag.right { left: auto; right: 1px; }
.tag.open { left: 23%; }
.flag { position: absolute; top: 150px; width: 22px; height: 89px; margin-left: -11px; display: flex; flex-direction: column; justify-content: space-between; align-items: center; background: repeating-linear-gradient(#fc7a68 0 5px, transparent 5px 8px) 10px 0 / 2px 100% no-repeat; }
.flag i { width: 8px; height: 8px; border-radius: 50%; background: #f4635a; }
.flag em { width: 22px; height: 23px; border: 1px solid #fff; border-radius: 5px; background: #fc7a68; color: #fff; font-size: 19px; line-height: 21px; font-weight: 600; text-align: center; }
.expand { position: absolute; right: 6px; top: 13px; width: 44px; height: 44px; border-radius: 50%; background: #fff1ea; display: grid; place-items: center; }

.bar-head { height: 37px; padding: 0 7px 0 127px; display: flex; align-items: center; gap: 4px; }
.pick { flex: none; width: 115px; height: 31px; padding: 0 27px 0 0; border: 2px solid #e1e4ea; border-radius: 4px; appearance: none; text-align-last: center; font-size: 22px; line-height: 26px; color: #333; background: #f7f8fb url("data:image/svg+xml,%3Csvg xmlns='http://www.w3.org/2000/svg' width='10' height='8'%3E%3Cpath d='M0 0h10L5 8z' fill='%23666'/%3E%3C/svg%3E") no-repeat right 8px center; }
.readings { flex: 1; display: flex; white-space: nowrap; line-height: 24px; }
.readings.vol { font-size: 19px; gap: 6px; }
.readings.macd { font-size: 15px; justify-content: space-between; }
.readings.kdj { font-size: 17px; justify-content: space-between; }
.readings.game { font-size: 13px; justify-content: space-between; }
.axis { height: 29px; display: flex; justify-content: space-between; font-size: 19px; line-height: 32px; color: #666; padding-right: 1px; }
.axis span:nth-child(1) { width: 123px; }
.axis span:nth-child(2) { padding-left: 2px; border-left: 1px solid #aaa; }
.axis span:nth-child(3) { flex: 1; text-align: center; padding-left: 20px; }

.book { border-left: 1px solid #dcdfe8; border-top: 1px solid #dcdfe6; padding-top: 4px; display: flex; flex-direction: column; min-width: 0; }
.book-tabs { display: grid; grid-template-columns: repeat(3, 1fr); padding: 0 4px 0 3px; }
.book-tabs button { height: 38px; border-radius: 6px; font-size: 20px; line-height: 36px; color: #666; }
.book-tabs .on { background: #ffede4; color: #ff5000; font-weight: 500; }
.all { margin-top: 6px; height: 40px; line-height: 40px; font-size: 24px; text-align: center; color: #ff5000; white-space: nowrap; padding-right: 4px; }
.levels { table-layout: fixed; font-size: 21px; line-height: 24px; }
.levels th { width: 63px; padding-left: 5px; text-align: left; color: #666; font-size: 20px; }
.levels td { width: 63px; text-align: right; }
.levels .qty { width: auto; position: relative; padding-right: 19px; color: #222; }
.qty i { position: absolute; right: 19px; top: 50%; height: 23px; margin-top: -12px; background: #0a9f0a; opacity: .27; }
.buys .qty i { background: #f22; }
.qty u { position: absolute; right: 8px; top: 50%; width: 9px; height: 9px; margin-top: -5px; border-radius: 50%; background: #d2d5dc; }
.qty u.active { background: #2f72c4; }
.sells { height: 310px; }
.ratio { height: 5px; margin: 8px 5px 6px 4px; background: #5cb944; }
.ratio i { display: block; width: 20%; height: 5px; background: #ea4444; clip-path: polygon(0 0, 100% 0, 90% 100%, 0 100%); }
.buys { height: 344px; margin-bottom: -7px; }
.ticks-head { position: relative; height: 31px; padding-left: 18px; border-top: 1px solid #d8dbe2; background: #fff; display: flex; align-items: center; justify-content: center; gap: 13px; font-size: 22px; line-height: 30px; color: #666; }
.ticks { height: 104px; font-size: 21px; line-height: 24px; }
.ticks th { width: 86px; padding-left: 5px; text-align: left; color: #666; }
.ticks td:last-child { text-align: right; padding-right: 7px; }
.ticks svg { display: inline-block; vertical-align: -2px; }

.queues { height: 92px; border-top: 2px solid #d8dae2; display: grid; grid-template-columns: 383fr 385fr; overflow: hidden; font-size: 23px; }
.queue + .queue { border-left: 2px solid #d8dae2; }
.queue-head { height: 33px; padding: 0 4px; border-bottom: 2px solid #dfe1e8; display: grid; grid-template-columns: 106fr 100fr 169fr; line-height: 33px; color: #222; }
.queue-head .up { color: #f22; }
.queue-head span:nth-child(2) { text-align: center; }
.queue-head span:nth-child(3) { text-align: right; }
.queue-grid { display: grid; grid-template-columns: repeat(4, 1fr); padding-right: 8px; }
.queue-grid span { height: 34px; line-height: 34px; text-align: right; }

.dock { min-height: 158px; padding-top: 9px; border-top: 2px solid #e6e7ea; background: #f7f8fb; display: grid; grid-template-columns: 171fr 149fr 149fr 149fr 149fr; color: #666; font-size: 22px; align-items: start; }
.dock a { display: flex; flex-direction: column; align-items: center; gap: 7px; line-height: 30px; white-space: nowrap; }
.dock svg { height: 38px; }
.dock .index { gap: 4px; font-size: 24px; }
.dock .index svg { height: 7px; }
.index-name { padding-left: 20px; }
</style>
